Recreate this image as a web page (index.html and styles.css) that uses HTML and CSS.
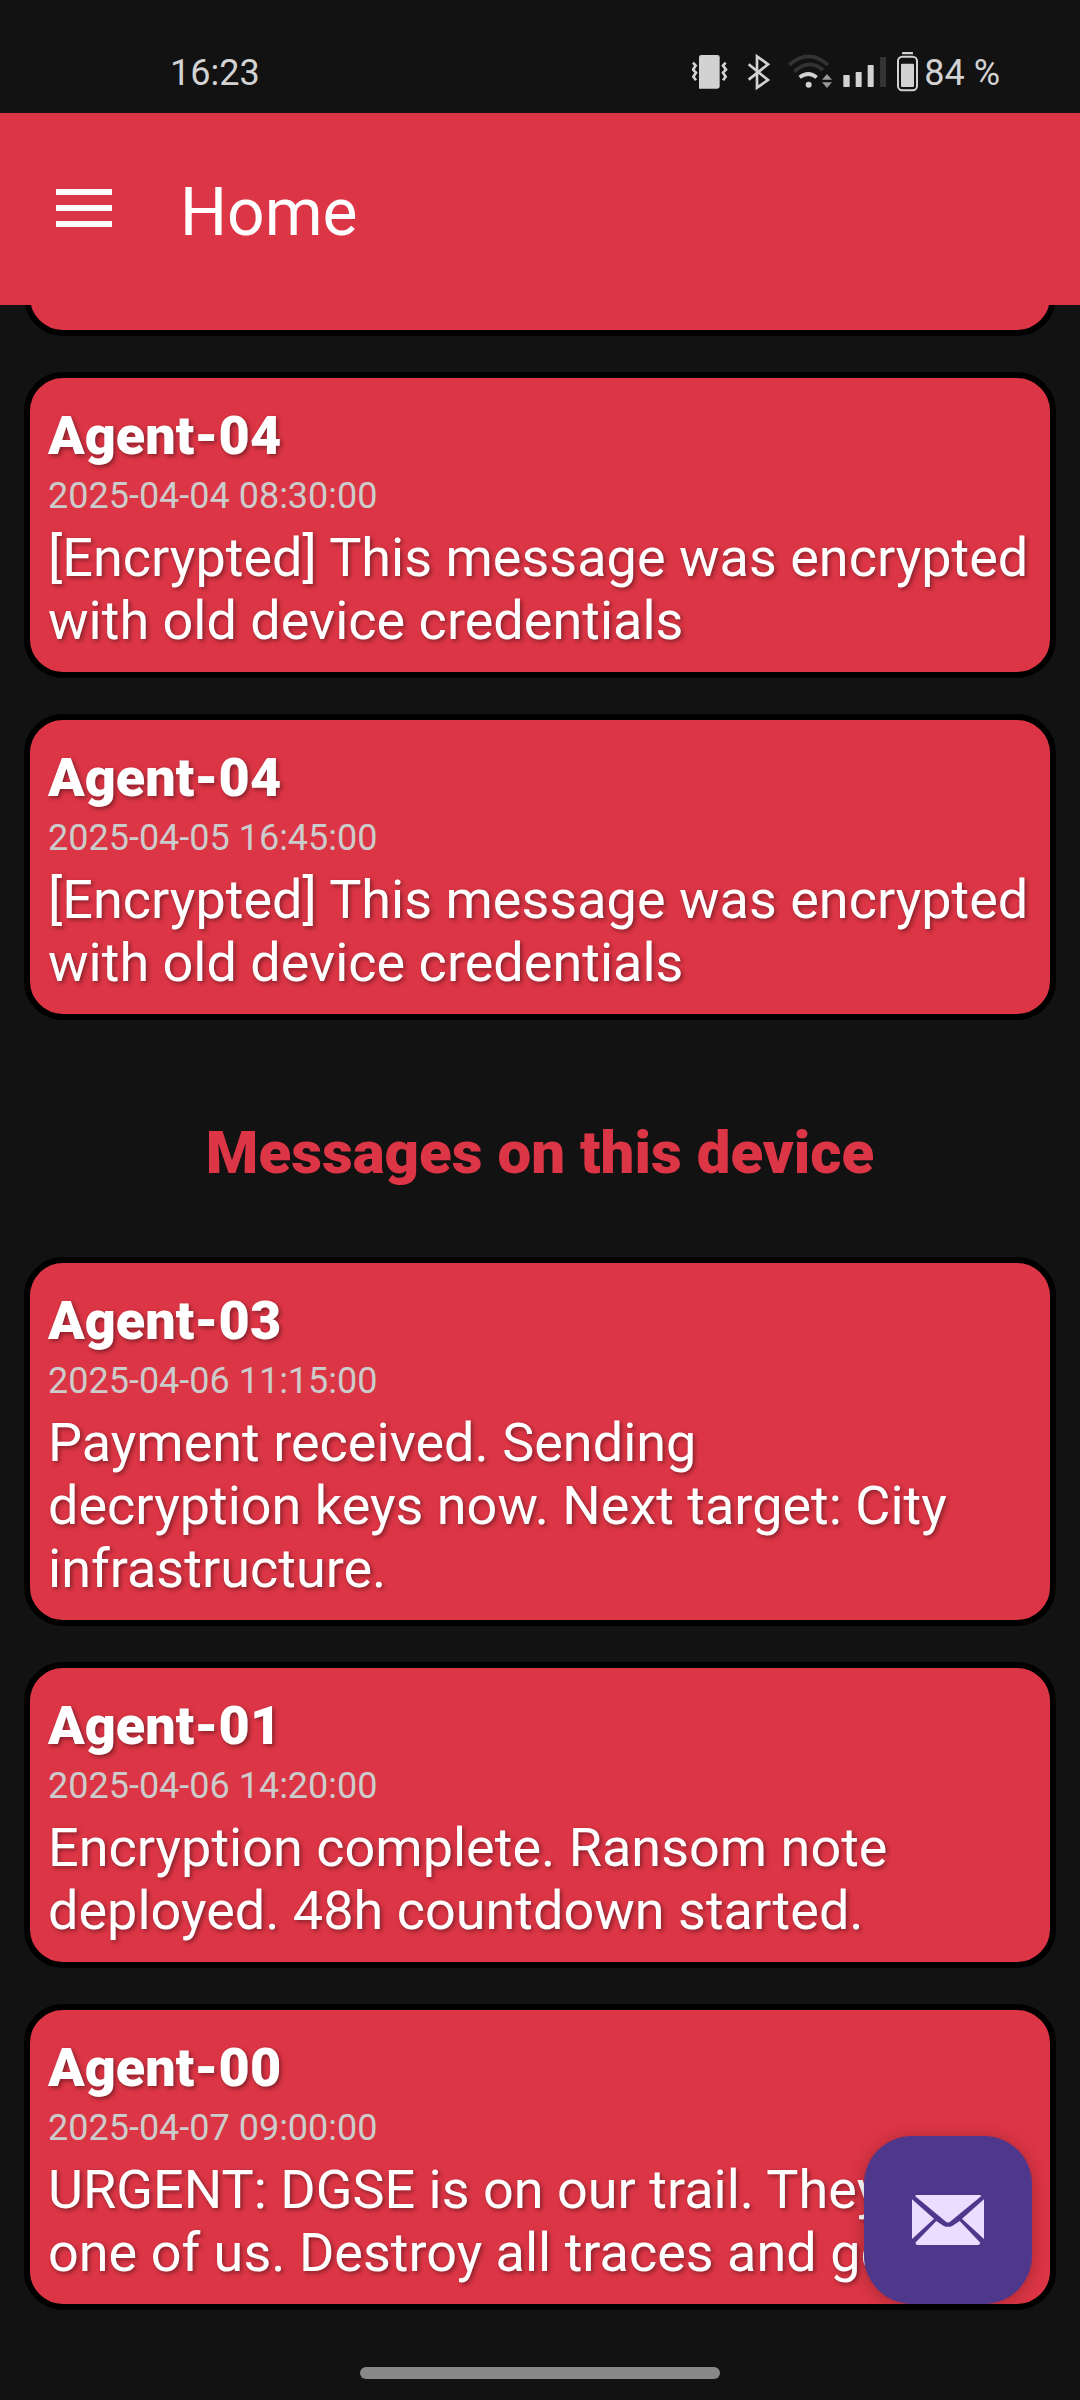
FILE: index.html
```html
<!DOCTYPE html>
<html lang="en">
<head>
<meta charset="utf-8">
<meta name="viewport" content="width=device-width, initial-scale=1">
<title>Home</title>
<link rel="stylesheet" href="styles.css">
</head>
<body>
<div class="screen">
  <div class="status-bar">
    <span class="status-text">16:23</span>
    <div class="status-icons">
      <svg width="36" height="45" viewBox="36 60 108 135" aria-hidden="true">
        <path class="lit" d="M64 75h48q7 0 7 7v87q0 7-7 7H57V82q0-7 7-7z"/>
        <path class="lit-line" d="M39 98l8 9-8 12 9 9-8 12 8 11M137 98l-8 9 9 12-9 9 8 12-8 11"/>
      </svg>
      <svg width="39" height="45" viewBox="174 60 117 135" aria-hidden="true">
        <path class="lit-line" d="M206 103l58 47-33 23V79l33 24-58 46"/>
      </svg>
      <svg width="46" height="45" viewBox="321 60 138 135" aria-hidden="true">
        <path class="dim-line" d="M328 105Q386 53 444 105"/>
        <path class="dim-line" d="M343 125Q386 84 429 120"/>
        <path class="wifi-line" d="M359 142Q385 122 410 142"/>
        <circle class="lit" cx="386" cy="164" r="9"/>
        <path class="mid" d="M441 132l15 17h-30zM426 157h30l-15 17z"/>
      </svg>
      <svg width="44" height="45" viewBox="489 60 132 135" aria-hidden="true">
        <rect class="lit" x="490" y="135" width="19" height="36" rx="2"/>
        <rect class="lit" x="527" y="126" width="18" height="45" rx="2"/>
        <rect class="lit" x="563" y="105" width="18" height="66" rx="2"/>
        <rect class="dim" x="600" y="81" width="18" height="90" rx="2"/>
      </svg>
      <div class="battery">
        <svg width="22" height="45" viewBox="651 60 66 135" aria-hidden="true">
          <rect class="lit" x="666" y="66" width="33" height="7" rx="2"/>
          <rect class="lit-line battery-shell" x="654" y="80" width="57" height="101" rx="13"/>
          <rect class="lit" x="663" y="101" width="39" height="70" rx="4"/>
        </svg>
        <span class="status-text">84 %</span>
      </div>
    </div>
  </div>

  <header class="app-bar">
    <button class="menu-button" type="button" aria-label="Open menu">
      <svg width="56" height="40" viewBox="0 0 56 40" aria-hidden="true">
        <path fill="#fff" d="M0 0h56v6H0zM0 16h56v6H0zM0 32h56v6H0z"/>
      </svg>
    </button>
    <h1 class="app-title">Home</h1>
  </header>

  <main class="messages">
    <div class="card card-scrolled"></div>
    <article class="card">
      <h3 class="sender">Agent-04</h3>
      <time class="date">2025-04-04 08:30:00</time>
      <p class="body">[Encrypted] This message was encrypted with old device credentials</p>
    </article>
    <article class="card">
      <h3 class="sender">Agent-04</h3>
      <time class="date">2025-04-05 16:45:00</time>
      <p class="body">[Encrypted] This message was encrypted with old device credentials</p>
    </article>
    <h2 class="section-title">Messages on this device</h2>
    <article class="card">
      <h3 class="sender">Agent-03</h3>
      <time class="date">2025-04-06 11:15:00</time>
      <p class="body">Payment received. Sending<br>decryption keys now. Next target: City infrastructure.</p>
    </article>
    <article class="card">
      <h3 class="sender">Agent-01</h3>
      <time class="date">2025-04-06 14:20:00</time>
      <p class="body">Encryption complete. Ransom note deployed. 48h countdown started.</p>
    </article>
    <article class="card">
      <h3 class="sender">Agent-00</h3>
      <time class="date">2025-04-07 09:00:00</time>
      <p class="body">URGENT: DGSE is on our trail. They<br>one of us. Destroy all traces and go</p>
    </article>
  </main>

  <div class="gesture-bar"><span class="gesture-handle"></span></div>

  <button class="fab" type="button" aria-label="New message">
    <svg width="72" height="50" viewBox="0 0 216 150" aria-hidden="true">
      <g fill="#eaddff">
        <path d="M9 3Q11 0 15 0H202Q206 0 208 3L116 79Q108 86 100 79z"/>
        <path d="M0 13L66 71 0 132z"/>
        <path d="M216 13L150 71 216 132z"/>
        <path d="M73 78L94 92Q108 99 122 92L143 78 205 143Q203 150 198 150H17Q12 150 10 143z"/>
      </g>
    </svg>
  </button>
</div>
</body>
</html>
```
FILE: styles.css
```css
* {
  box-sizing: border-box;
}

body {
  margin: 0;
  background: #121212;
  color: #fff;
  font-family: Roboto, "Liberation Sans", sans-serif;
}

h1, h2, h3, p {
  margin: 0;
}

button {
  border: 0;
  padding: 0;
  background: none;
  cursor: pointer;
}

svg {
  display: block;
}

.screen {
  position: relative;
  display: flex;
  flex-direction: column;
  min-height: 100vh;
}

/* Status bar */
.status-bar {
  display: flex;
  align-items: center;
  justify-content: space-between;
  padding: 50px 80px 18px 170px;
  color: #d2d2d2;
}

.status-text {
  font-size: 36px;
  line-height: 42px;
}

.status-icons {
  display: flex;
  align-items: center;
  gap: 10px;
}

.battery {
  display: flex;
  align-items: center;
  gap: 5px;
}

.lit { fill: #d2d2d2; }
.mid { fill: #999; }
.dim { fill: #333; }

.lit-line, .dim-line, .wifi-line {
  fill: none;
  stroke: #d2d2d2;
  stroke-width: 8;
}

.battery-shell {
  stroke-width: 6;
}

.wifi-line {
  stroke-width: 11;
}

.dim-line {
  stroke: #333;
  stroke-width: 11;
}

/* App bar */
.app-bar {
  position: relative;
  z-index: 1;
  display: flex;
  align-items: center;
  gap: 68px;
  height: 192px;
  padding: 0 56px;
  background: #dc3545;
}

.app-title {
  padding-top: 8px;
  font-size: 66px;
  font-weight: 400;
  line-height: 78px;
}

/* Message list */
.messages {
  display: flex;
  flex-direction: column;
  gap: 36px;
  padding: 0 24px;
}

.card {
  padding: 26px 18px 20px;
  border: 6px solid #000;
  border-radius: 39px;
  background: #dc3545;
}

/* Scrolled away: only its lower edge shows below the app bar */
.card-scrolled {
  height: 100px;
  margin-top: -69px;
}

.sender {
  font-size: 54px;
  font-weight: 900;
  line-height: 63px;
  text-shadow: 2px 2px 4px rgba(0, 0, 0, 0.4);
}

.date {
  display: block;
  margin: 8px 0 9px;
  color: #ccc;
  font-size: 36px;
  line-height: 42px;
}

.body {
  font-size: 54px;
  line-height: 63px;
  text-shadow: 2px 2px 4px rgba(0, 0, 0, 0.4);
}

.section-title {
  padding: 62px 0 33px;
  color: #dc3545;
  font-size: 60px;
  font-weight: 900;
  line-height: 70px;
  text-align: center;
}

/* Bottom gesture area */
.gesture-bar {
  display: flex;
  justify-content: center;
  margin-top: auto;
  padding: 21px 0;
}

.gesture-handle {
  width: 33.3333%;
  height: 12px;
  border-radius: 6px;
  background: #888;
}

/* Floating compose button */
.fab {
  position: absolute;
  right: 48px;
  bottom: 96px;
  z-index: 2;
  display: grid;
  place-items: center;
  width: 168px;
  height: 168px;
  border-radius: 48px;
  background: #4f378b;
  box-shadow: 0 2px 16px rgba(0, 0, 0, 0.25);
}
```
